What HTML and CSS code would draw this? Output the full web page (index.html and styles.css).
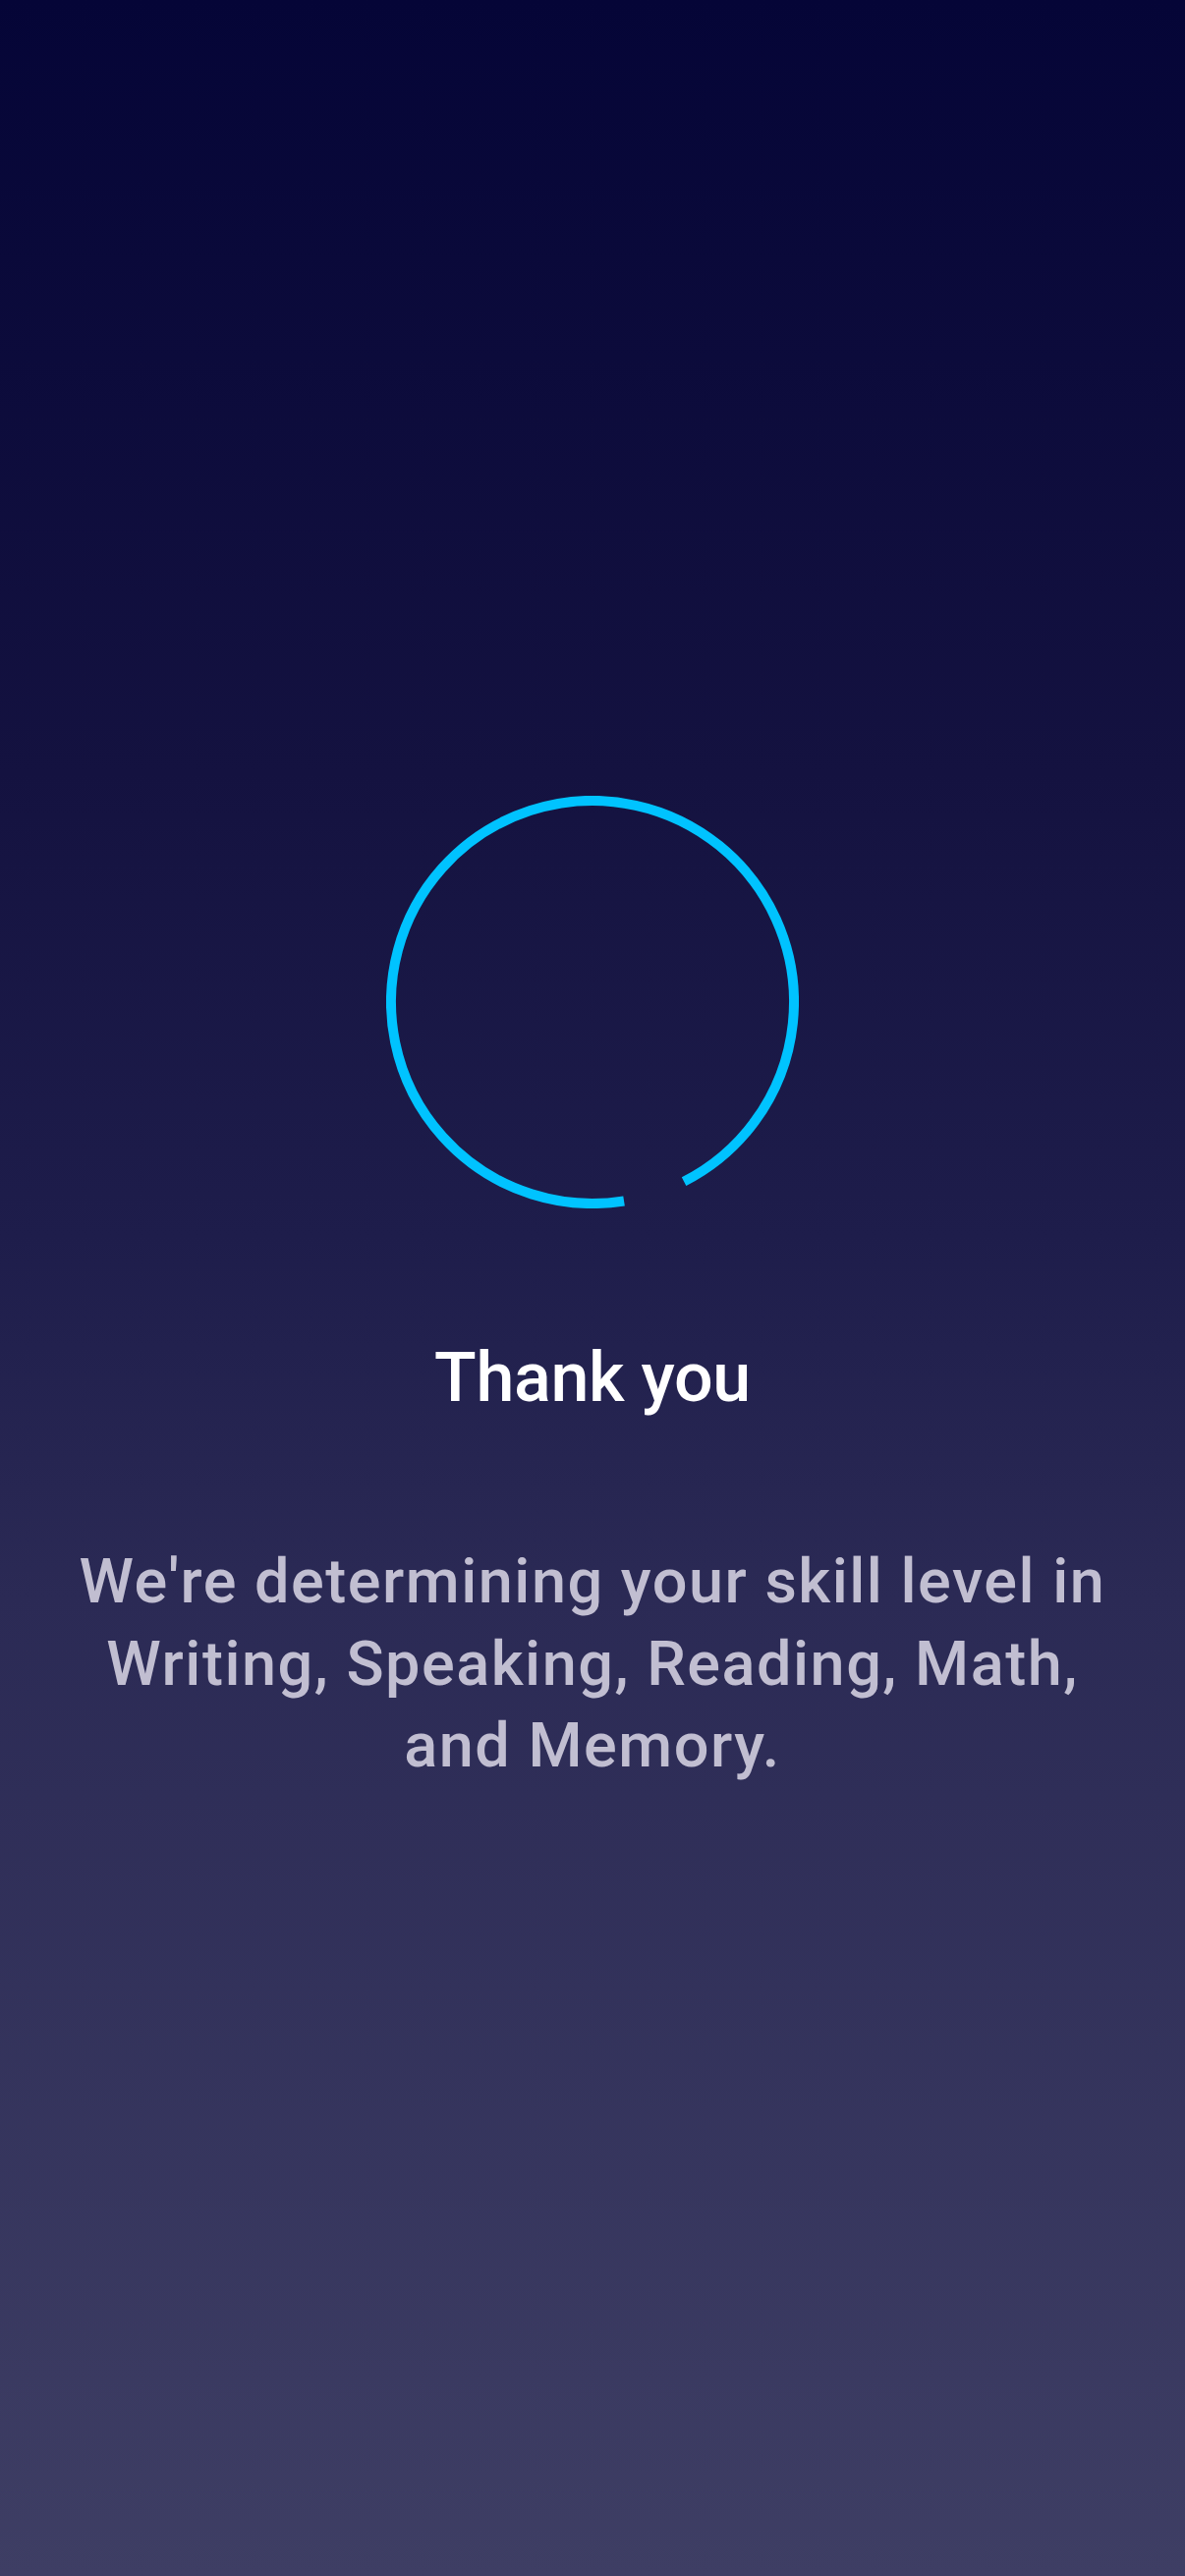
FILE: index.html
```html
<!DOCTYPE html>
<html lang="en">
<head>
<meta charset="utf-8">
<title>Thank you</title>
<link rel="stylesheet" href="styles.css">
</head>
<body>
<main class="screen">
  <svg class="spinner" width="420" height="420" viewBox="0 0 420 420" aria-hidden="true">
    <path d="M 242.07 412.48 A 205 205 0 1 1 303.07 392.66" fill="none" stroke="#00c3ff" stroke-width="10" stroke-linecap="butt"/>
  </svg>
  <h1 class="title">Thank you</h1>
  <p class="message">We're determining your skill level in<br>Writing, Speaking, Reading, Math,<br>and Memory.</p>
</main>
</body>
</html>
```

FILE: styles.css
```css
html, body {
  margin: 0;
  padding: 0;
}
body {
  width: 1206px;
  height: 2622px;
  background: linear-gradient(180deg, #050537 0%, #141240 30%, #1e1d4b 48%, #2b2a55 62%, #3e3e64 100%);
  font-family: Roboto, "Open Sans", sans-serif;
  overflow: hidden;
}
.screen {
  display: flex;
  flex-direction: column;
  align-items: center;
  padding-top: 810px;
}
.spinner {
  display: block;
  width: 420px;
  height: 420px;
}
.title {
  margin: 128px 0 0;
  font-size: 70px;
  line-height: 88px;
  font-weight: 500;
  letter-spacing: -0.3px;
  color: #ffffff;
  text-align: center;
}
.message {
  margin: 122px 0 0;
  font-size: 63px;
  line-height: 83.5px;
  font-weight: 500;
  letter-spacing: 1.5px;
  color: #c1bed1;
  text-align: center;
}
```
